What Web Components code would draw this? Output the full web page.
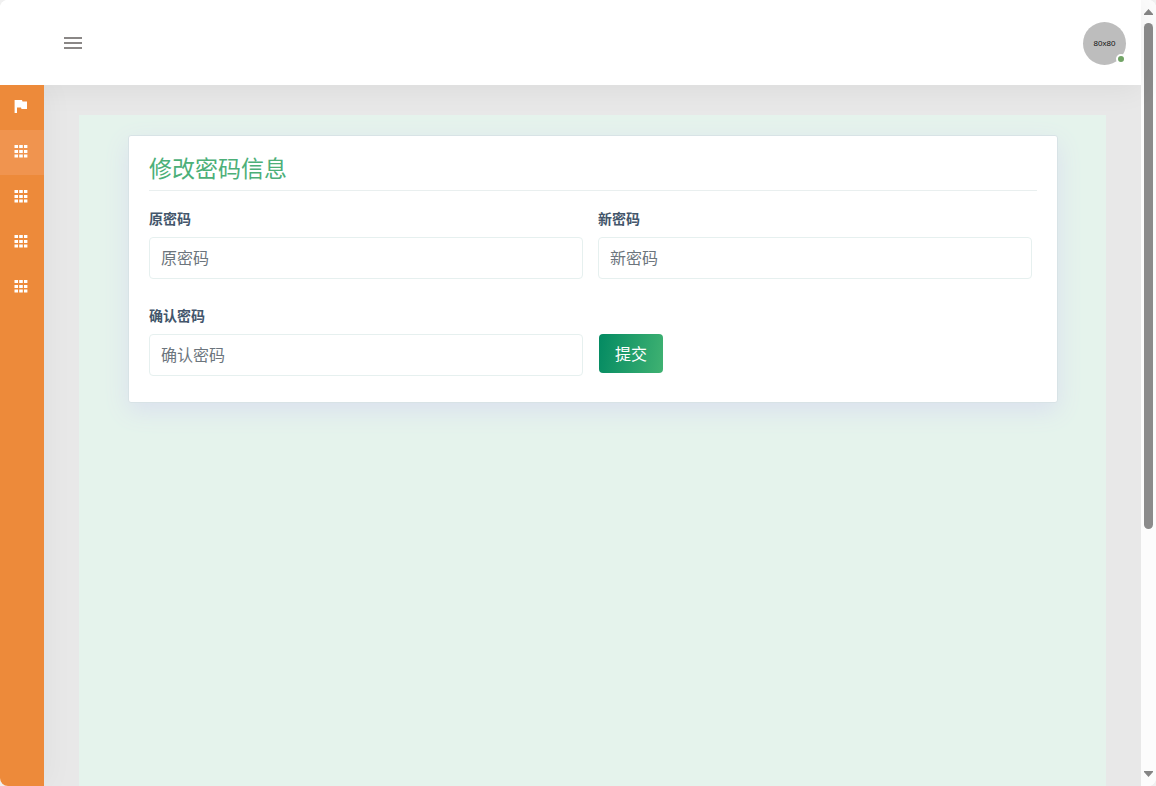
<!DOCTYPE html>
<html lang="zh-CN">
<head>
<meta charset="utf-8">
<meta name="viewport" content="width=device-width, initial-scale=1">
<title>修改密码信息</title>
<style>
  body { margin: 0; background: #f0f0f0; font-family: "Noto Sans CJK SC", sans-serif; }
</style>
</head>
<body>
<app-shell>
  <top-bar slot="header"></top-bar>
  <side-nav slot="nav">
    <nav-item icon="flag" label="首页"></nav-item>
    <nav-item icon="grid" label="菜单一" active></nav-item>
    <nav-item icon="grid" label="菜单二"></nav-item>
    <nav-item icon="grid" label="菜单三"></nav-item>
    <nav-item icon="grid" label="菜单四"></nav-item>
  </side-nav>
  <form-card heading="修改密码信息">
    <text-field label="原密码"></text-field>
    <text-field label="新密码"></text-field>
    <text-field label="确认密码"></text-field>
    <submit-button>提交</submit-button>
  </form-card>
  <scroll-rail slot="rail"></scroll-rail>
</app-shell>

<script>
const define = (name, render) => customElements.define(name, class extends HTMLElement {
  constructor() {
    super();
    this.attachShadow({ mode: 'open' });
  }
  connectedCallback() {
    this.shadowRoot.innerHTML = '<style>*{box-sizing:border-box}</style>' + render(this);
  }
});

define('app-shell', () => `
  <style>
    :host { display: grid; grid-template-columns: 1fr 15px; height: 100vh; border-radius: 8px; overflow: hidden; background: #fff; }
    .page { display: flex; flex-direction: column; min-width: 0; min-height: 0; }
    .header { position: relative; z-index: 2; box-shadow: 0 4px 30px rgba(0,0,0,.06); }
    .body { display: flex; flex: 1; min-height: 0; overflow: hidden; }
    .nav { display: flex; box-shadow: 4px 0 30px rgba(0,0,0,.04); z-index: 3; }
    main { display: flex; flex: 1; min-width: 0; padding: 30px 35px 0; background: #e8e8e8; }
    .panel { flex: 1; min-width: 0; padding: 20px 48px 0 49px; background: #e5f3ec; }
  </style>
  <div class="page">
    <div class="header"><slot name="header"></slot></div>
    <div class="body">
      <div class="nav"><slot name="nav"></slot></div>
      <main><div class="panel"><slot></slot></div></main>
    </div>
  </div>
  <slot name="rail"></slot>`);

define('top-bar', () => `
  <style>
    :host { display: block; }
    header { display: flex; align-items: center; justify-content: space-between; height: 85px; padding: 2px 15px 0 61px; background: #fff; }
    button { display: flex; align-items: flex-start; height: 25px; padding: 0; border: 0; background: none; cursor: pointer; }
    .avatar { position: relative; display: grid; place-items: center; width: 43px; height: 43px; border-radius: 50%; background: #bdbdbd; color: #111; font: 8px "Liberation Sans", sans-serif; text-decoration: none; }
    .dot { position: absolute; right: 0; bottom: 1px; width: 10px; height: 10px; border: 2px solid #fff; border-radius: 50%; background: #71a465; }
  </style>
  <header>
    <button type="button" aria-label="切换菜单">
      <svg width="24" height="24" viewBox="0 0 24 24" fill="#8a8786"><path d="M3 6h18v2H3zM3 11h18v2H3zM3 16h18v2H3z"/></svg>
    </button>
    <a class="avatar" href="#">80x80<span class="dot"></span></a>
  </header>`);

define('side-nav', () => `
  <style>
    :host { display: block; width: 44px; background: #ed8a3a; }
    nav { display: flex; flex-direction: column; }
  </style>
  <nav><slot></slot></nav>`);

const icons = {
  flag: '<path d="M2.600 3H10l.5 1.500H15V12H9.500L9 10.500H5V16H2.600z"/>',
  grid: '<path d="M2.500 3H6v3H2.500zM7.200 3h3.600v3H7.200zM12 3h3.400v3H12zM2.500 8H6v3H2.500zM7.200 8h3.600v3H7.200zM12 8h3.400v3H12zM2.500 12.600H6v3H2.500zM7.200 12.600h3.600v3H7.200zM12 12.600h3.400v3H12z"/>'
};
define('nav-item', el => `
  <style>
    :host { display: block; }
    :host([active]) { background: #f0944f; }
    a { display: flex; align-items: center; height: 45px; padding: 0 12px 3px; }
  </style>
  <a href="#" aria-label="${el.getAttribute('label')}">
    <svg width="18" height="18" viewBox="0 0 18 18" fill="#fff">${icons[el.getAttribute('icon')]}</svg>
  </a>`);

define('form-card', el => `
  <style>
    :host { display: block; }
    section { padding: 15px 20px 26px; border: 1px solid #d8e3e6; border-radius: 3px; background: #fff; box-shadow: 0 8px 24px #dae0ee; }
    h1 { margin: 0; padding-bottom: 7px; border-bottom: 1px solid #e9efef; color: #4caf78; font-size: 23px; font-weight: 400; line-height: 32px; }
    form { display: grid; grid-template-columns: 1fr 1fr; gap: 26px 15px; align-items: end; margin-top: 17px; padding-right: 5px; }
  </style>
  <section>
    <h1>${el.getAttribute('heading')}</h1>
    <form><slot></slot></form>
  </section>`);

define('text-field', el => `
  <style>
    :host { display: block; min-width: 0; }
    label { display: block; margin-bottom: 9px; color: #43566b; font-size: 14px; font-weight: 700; line-height: 20px; }
    input { display: block; width: 100%; height: 42px; padding: 0 11px 2px; border: 1px solid #e6f0ef; border-radius: 4px; background: #fff; color: #495057; font: inherit; font-size: 16px; }
    input::placeholder { color: #6c757d; opacity: 1; }
  </style>
  <label for="f">${el.getAttribute('label')}</label>
  <input id="f" type="password" placeholder="${el.getAttribute('label')}">`);

define('submit-button', () => `
  <style>
    :host { display: block; padding: 0 0 3px 1px; }
    button { display: block; height: 39px; padding: 0 16px 2px; border: 0; border-radius: 4px; background: linear-gradient(100deg, #038a62, #40b272); color: #fff; font: inherit; font-size: 16px; cursor: pointer; }
  </style>
  <button type="submit"><slot></slot></button>`);

define('scroll-rail', () => `
  <style>
    :host { display: flex; flex-direction: column; align-items: center; min-height: 0; padding: 9px 0; background: #fcfcfc; }
    .track { display: flex; flex-direction: column; flex: 1; min-height: 0; margin: 8px 0; }
    .thumb { flex: 13; width: 9px; border-radius: 5px; background: #8b8b8b; }
    .rest { flex: 6; }
    svg { display: block; }
  </style>
  <svg width="9" height="6" viewBox="0 0 9 6" fill="#858585"><path d="M4.500 0L9 5v1H0V5z"/></svg>
  <div class="track"><div class="thumb"></div><div class="rest"></div></div>
  <svg width="9" height="6" viewBox="0 0 9 6" fill="#858585"><path d="M4.500 6L9 1V0H0v1z"/></svg>`);
</script>
</body>
</html>
